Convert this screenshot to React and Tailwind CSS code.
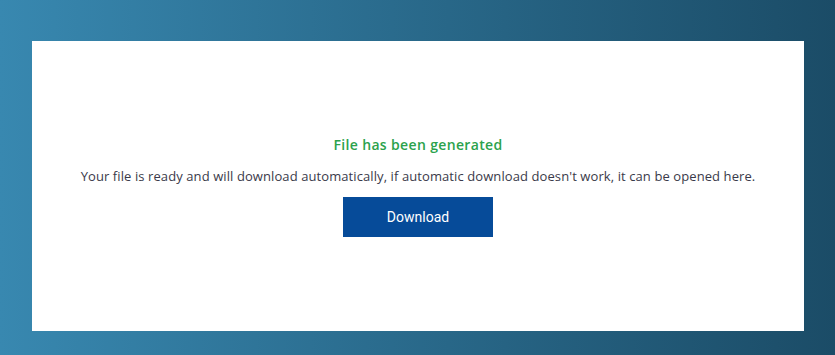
import React from "react";

function App() {
  return (
    <div className="w-[835px] h-[355px] bg-gradient-to-r from-[#3888b0] to-[#1b4c67] pt-[41px] pl-[32px] pr-[31px] pb-[24px]">
      <div className="w-full h-full bg-white flex flex-col items-center justify-center">
        {/* heading */}
        <h2 className="text-[14px] font-semibold text-[#2ba24c] font-['Open_Sans',sans-serif] leading-5 tracking-[0.35px]">
          File has been generated
        </h2>
        <p className="mt-[11px] text-[13px] text-[#3a3a4a] font-['Open_Sans',sans-serif] leading-5 tracking-[0.09px]">
          Your file is ready and will download automatically, if automatic
          download doesn't work, it can be opened here.
        </p>
        <button className="mt-[11px] w-[150px] h-[40px] bg-[#064b99] text-white text-[14px] font-['Roboto',sans-serif]">
          Download
        </button>
      </div>
    </div>
  );
}

export default App;
